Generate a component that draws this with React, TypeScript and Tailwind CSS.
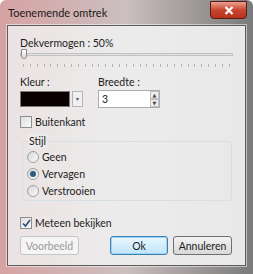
const FONT = { fontFamily: 'Lato, "Open Sans", "DejaVu Sans", sans-serif' };

function Radio({ label, checked }: { label: string; checked?: boolean }) {
  return (
    <div className="flex h-[17px] items-center gap-[3px]">
      <span className="flex h-[12px] w-[12px] items-center justify-center rounded-full border border-[#a2a2a2] bg-gradient-to-br from-[#d6d6d6] to-[#fbfbfb]">
        {checked && <span className="h-[6px] w-[6px] rounded-full bg-[#2f5b7c]" />}
      </span>
      <span className="text-[10.5px] leading-[14px] text-[#1c1c1c]">{label}</span>
    </div>
  );
}

function Check({ label, checked }: { label: string; checked?: boolean }) {
  return (
    <div className="flex h-[14px] items-center gap-[3px]">
      <span className="flex h-[12px] w-[12px] items-center justify-center border border-[#8e8f8f] bg-gradient-to-br from-[#dedede] to-[#fafafa]">
        {checked && (
          <svg width="9" height="9" viewBox="0 0 9 9">
            <path d="M1 4.5 L3.5 7 L8 1" fill="none" stroke="#2a4a7a" strokeWidth="1.6" />
          </svg>
        )}
      </span>
      <span className="text-[10.5px] leading-[14px] text-[#1c1c1c]">{label}</span>
    </div>
  );
}

export default function App() {
  return (
    <div
      style={FONT}
      className="relative flex h-[274px] w-[253px] flex-col overflow-hidden rounded-t-[6px] bg-gradient-to-r from-[#d6a2a3] via-[#cbbfbf] to-[#7a7a7a]"
    >
      {/* title bar */}
      <div className="flex h-[25px] items-start justify-between pl-[8px]">
        <span className="mt-[6px] text-[11px] leading-[14px] text-[#1a1a1a]">Toenemende omtrek</span>
        <button
          type="button"
          className="mr-[6px] mt-[1px] flex h-[18px] w-[37px] items-center justify-center rounded-b-[4px] border border-[#5a1a14] bg-gradient-to-b from-[#e8a08e] via-[#c8442e] to-[#b8321c]"
        >
          <svg width="10" height="9" viewBox="0 0 10 9">
            <path d="M1.5 1 L8.5 8 M8.5 1 L1.5 8" stroke="#fff" strokeWidth="2.2" />
          </svg>
        </button>
      </div>

      {/* client area */}
      <div className="mx-[7px] flex h-[241px] flex-col border border-[#5c5c5c] bg-gradient-to-r from-[#ebe3e3] via-[#ececec] to-[#e8e8e8] pl-[12px] pr-[12px] shadow-[0_0_0_1px_rgba(255,255,255,0.5)]">
        <div className="mt-[10px] h-[14px] text-[10.5px] leading-[14px] text-[#1c1c1c]">Dekvermogen : 50%</div>

        {/* slider */}
        <div className="relative h-[18px] w-[213px]">
          <div className="absolute left-0 right-0 top-[3px] h-[3px] border border-[#c2c2c2] bg-[#e0e0e0]" />
          <div className="absolute left-[1px] top-[-1px] h-[10px] w-[6px] rounded-b-[3px] border border-[#8a8a8a] bg-gradient-to-b from-[#fcfcfc] to-[#dcdcdc]" />
          <div className="absolute left-[3px] right-[3px] top-[14px] flex justify-between">
            {Array.from({ length: 31 }).map((_, i) => (
              <span key={i} className="h-[3px] w-[1px] bg-[#b4b4b4]" />
            ))}
          </div>
        </div>

        <div className="mt-[7px] flex gap-[15px]">
          <div className="flex flex-col">
            <span className="h-[14px] text-[10.5px] leading-[14px] text-[#1c1c1c]">Kleur :</span>
            <div className="mt-[1px] flex h-[17px] items-center gap-[2px]">
              <div className="h-[16px] w-[50px] border border-[#7a7a7a] bg-[#0a0000]" />
              <div className="flex h-[16px] w-[11px] items-center justify-center border border-[#b5b5b5] bg-[#f0f0f0]">
                <span className="text-[6px] leading-none text-[#555]">▾</span>
              </div>
            </div>
          </div>
          <div className="flex flex-col">
            <span className="h-[14px] text-[10.5px] leading-[14px] text-[#1c1c1c]">Breedte :</span>
            <div className="mt-[1px] flex h-[18px] w-[62px] items-stretch border border-[#abadb3] bg-white">
              <span className="flex-1 pl-[3px] text-[10.5px] leading-[16px] text-[#1c1c1c]">3</span>
              <div className="flex w-[9px] flex-col">
                <span className="flex flex-1 items-center justify-center border border-[#c0c0c0] bg-[#eeeeee] text-[5px] leading-none text-[#444]">▲</span>
                <span className="flex flex-1 items-center justify-center border border-[#c0c0c0] bg-[#eeeeee] text-[5px] leading-none text-[#444]">▼</span>
              </div>
            </div>
          </div>
        </div>

        <div className="mt-[7px]">
          <Check label="Buitenkant" />
        </div>

        {/* group box */}
        <div className="relative ml-[2px] mt-[12px] h-[60px] w-[210px] rounded-[3px] border border-[#d5dfe5] pl-[4px] pt-[6px]">
          <span className="absolute left-[5px] top-[-8px] bg-[#ececec] px-[1px] text-[10.5px] leading-[14px] text-[#1c1c1c]">Stijl</span>
          <Radio label="Geen" />
          <Radio label="Vervagen" checked />
          <Radio label="Verstrooien" />
        </div>

        <div className="mt-[15px]">
          <Check label="Meteen bekijken" checked />
        </div>

        <div className="mt-[6px] flex items-center">
          <button
            type="button"
            className="h-[19px] w-[59px] rounded-[3px] border border-[#c5c5c5] bg-[#f4f4f4] text-[10.5px] leading-[14px] text-[#9a9a9a]"
          >
            Voorbeeld
          </button>
          <button
            type="button"
            className="ml-[31px] h-[19px] w-[58px] rounded-[3px] border border-[#3c7fb1] bg-gradient-to-b from-[#eaf6fd] to-[#bee6fd] text-[10.5px] leading-[14px] text-[#1c1c1c] shadow-[inset_0_0_0_1px_#9fd3f5]"
          >
            Ok
          </button>
          <button
            type="button"
            className="ml-[5px] h-[19px] w-[59px] rounded-[3px] border border-[#707070] bg-gradient-to-b from-[#f2f2f2] to-[#d8d8d8] text-[10.5px] leading-[14px] text-[#1c1c1c]"
          >
            Annuleren
          </button>
        </div>
      </div>
    </div>
  );
}
